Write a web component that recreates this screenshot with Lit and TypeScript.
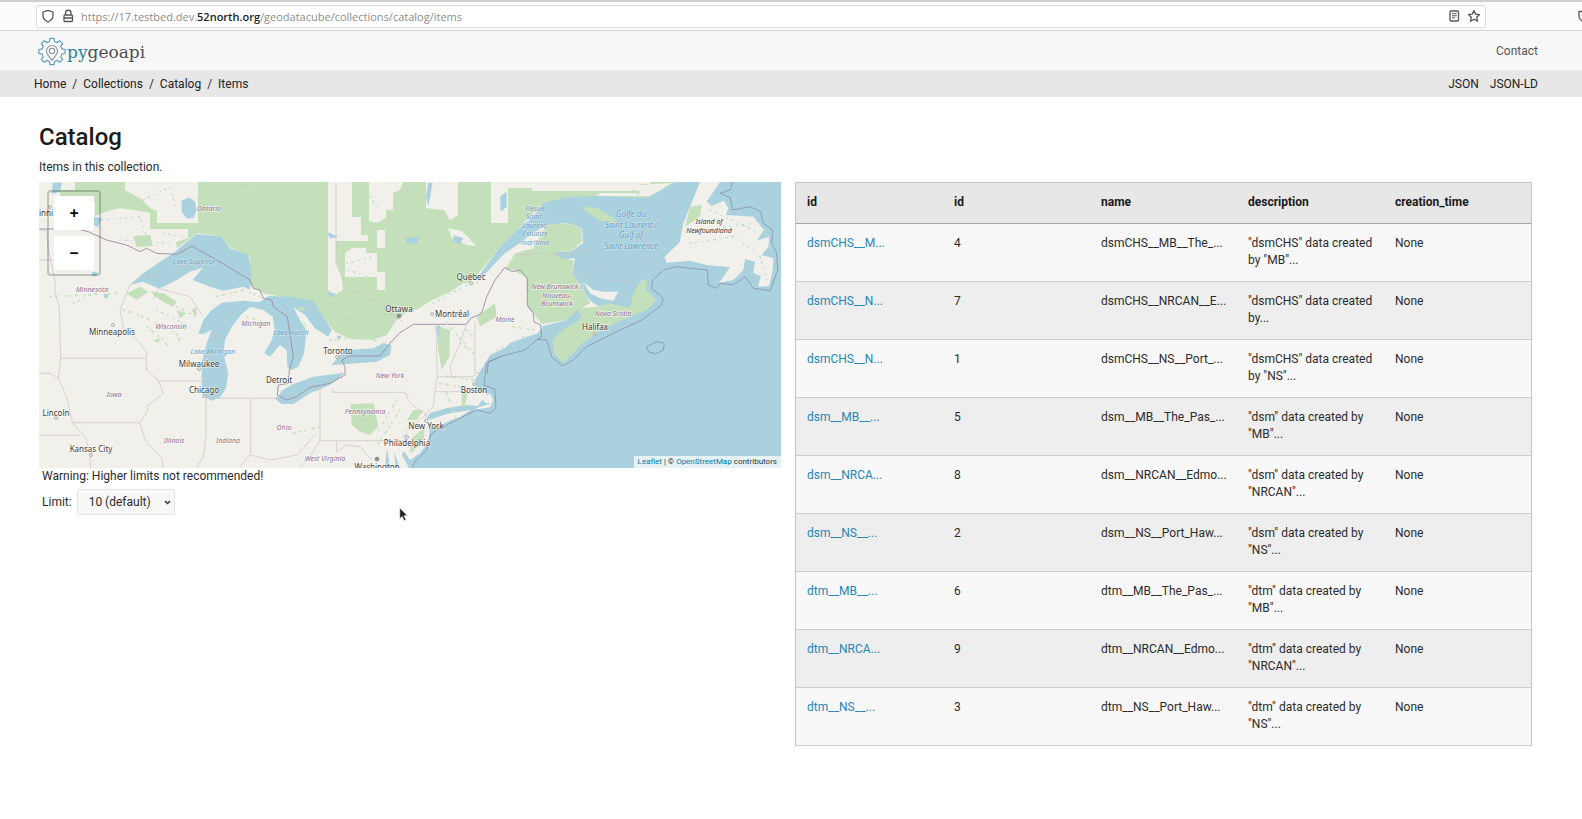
import { LitElement, html, svg, css } from "lit";
import { customElement, property } from "lit/decorators.js";

interface Item {
  id: string;
  num: number;
  name: string;
  lines: [string, string];
}

const ITEMS: Item[] = [
  { id: "dsmCHS__M...", num: 4, name: "dsmCHS__MB__The_...", lines: ['"dsmCHS" data created', 'by "MB"...'] },
  { id: "dsmCHS__N...", num: 7, name: "dsmCHS__NRCAN__E...", lines: ['"dsmCHS" data created', "by..."] },
  { id: "dsmCHS__N...", num: 1, name: "dsmCHS__NS__Port_...", lines: ['"dsmCHS" data created', 'by "NS"...'] },
  { id: "dsm__MB__...", num: 5, name: "dsm__MB__The_Pas_...", lines: ['"dsm" data created by', '"MB"...'] },
  { id: "dsm__NRCA...", num: 8, name: "dsm__NRCAN__Edmo...", lines: ['"dsm" data created by', '"NRCAN"...'] },
  { id: "dsm__NS__...", num: 2, name: "dsm__NS__Port_Haw...", lines: ['"dsm" data created by', '"NS"...'] },
  { id: "dtm__MB__...", num: 6, name: "dtm__MB__The_Pas_...", lines: ['"dtm" data created by', '"MB"...'] },
  { id: "dtm__NRCA...", num: 9, name: "dtm__NRCAN__Edmo...", lines: ['"dtm" data created by', '"NRCAN"...'] },
  { id: "dtm__NS__...", num: 3, name: "dtm__NS__Port_Haw...", lines: ['"dtm" data created by', '"NS"...'] },
];

/* Map labels: text, x, y, kind. */
const LABELS: [string, number, number, string][] = [
  ["inni", 46, 216, "city"],
  ["Ontario", 209, 211, "state"],
  ["Lake Superior", 194, 264, "water"],
  ["Minnesota", 92, 292, "state"],
  ["Wisconsin", 171, 329, "state"],
  ["Michigan", 256, 326, "state"],
  ["Lake Huron", 291, 335, "water"],
  ["Lake Michigan", 213, 354, "water"],
  ["Minneapolis", 112, 335, "city"],
  ["Milwaukee", 199, 367, "city"],
  ["Chicago", 204, 393, "city"],
  ["Detroit", 279, 383, "city"],
  ["Toronto", 338, 354, "city"],
  ["Ottawa", 399, 312, "city"],
  ["Montréal", 452, 317, "city"],
  ["Québec", 471, 280, "city"],
  ["Iowa", 114, 397, "state"],
  ["Lincoln", 56, 416, "city"],
  ["Kansas City", 91, 452, "city"],
  ["Illinois", 174, 443, "state"],
  ["Indiana", 228, 443, "state"],
  ["Ohio", 284, 430, "state"],
  ["West Virginia", 325, 461, "state"],
  ["Washington", 377, 470, "city"],
  ["Pennsylvania", 365, 414, "state"],
  ["New York", 390, 378, "state"],
  ["New York", 426, 429, "city"],
  ["Philadelphia", 407, 446, "city"],
  ["Boston", 474, 393, "city"],
  ["Maine", 505, 322, "state"],
  ["Halifax", 595, 330, "city"],
  ["Nova Scotia", 613, 316, "state"],
  ["New Brunswick /", 557, 289, "state"],
  ["Nouveau-", 557, 298, "state"],
  ["Brunswick", 557, 306, "state"],
  ["Fleuve", 535, 211, "water"],
  ["Saint-", 535, 219, "water"],
  ["Laurent,", 535, 228, "water"],
  ["Estuaire", 535, 236, "water"],
  ["maritime", 535, 245, "water"],
  ["Golfe du", 631, 217, "gulf"],
  ["Saint-Laurent /", 631, 228, "gulf"],
  ["Gulf of", 631, 238, "gulf"],
  ["Saint Lawrence", 631, 249, "gulf"],
  ["Island of", 709, 224, "island"],
  ["Newfoundland", 709, 233, "island"],
];

const DOTS: [number, number][] = [
  [50, 207], [113, 325], [199, 369], [204, 396], [337, 357], [432, 314],
  [471, 283], [56, 418], [91, 455], [426, 421], [407, 437], [474, 384], [595, 334],
];

@customElement("browser-bar")
export class BrowserBar extends LitElement {
  static styles = css`
    :host { display: block; }
    .bar {
      display: flex;
      align-items: center;
      box-sizing: border-box;
      height: 31px;
      padding: 0 0 0 36px;
      overflow: hidden;
      background: #fbfbfb;
      border-top: 2px solid #cfcfcf;
      border-bottom: 1px solid #d6d6d6;
    }
    .address {
      display: flex;
      flex: 1;
      align-items: center;
      gap: 6px;
      box-sizing: border-box;
      height: 23px;
      padding: 0 4px;
      background: #fff;
      border: 1px solid #dcdcdc;
      border-radius: 3px;
      margin-right: 92px;
    }
    .url { flex: 1; font-size: 11px; font-family: "Open Sans", "Noto Sans", sans-serif; color: #8c8c8c; white-space: nowrap; }
    .domain { color: #1c1c1c; font-weight: 600; }
    .icon {
      display: block;
      width: 14px;
      height: 14px;
      padding: 0;
      border: 0;
      background: none;
      color: #555;
    }
    .last { flex: none; margin-right: -10px; }
    svg { display: block; width: 14px; height: 14px; fill: none; stroke: currentColor; stroke-width: 1.3; }
  `;

  render() {
    return html`
      <div class="bar">
        <div class="address">
          <button class="icon" aria-label="Tracking protection">
            <svg viewBox="0 0 14 14"><path d="M7 1.300 12 3v3.500c0 3.300-2.500 5.200-5 6.500-2.500-1.300-5-3.200-5-6.500V3z" stroke-linejoin="round" /></svg>
          </button>
          <button class="icon" aria-label="Site information">
            <svg viewBox="0 0 14 14"><rect x="3" y="6" width="8.500" height="6.500" rx="1" /><path d="M4.500 6V4a2.700 2.700 0 0 1 5.500 0v2M3 9h8" /></svg>
          </button>
          <span class="url">https://17.testbed.dev.<span class="domain">52north.org</span>/geodatacube/collections/catalog/items</span>
          <button class="icon" aria-label="Reader view">
            <svg viewBox="0 0 14 14"><rect x="3" y="2" width="8.500" height="10" rx="1" /><path d="M5 4.700h4.700M5 6.800h4.700M5 8.900h3" stroke-width="1" /></svg>
          </button>
          <button class="icon" aria-label="Bookmark">
            <svg viewBox="0 0 14 14"><path d="m7 1.500 1.700 3.600 3.900.5-2.900 2.700.8 3.900L7 10.300l-3.500 1.900.8-3.900L1.400 5.600l3.900-.5z" stroke-linejoin="round" /></svg>
          </button>
        </div>
        <button class="icon last" aria-label="Save to Pocket">
          <svg viewBox="0 0 14 14"><path d="M1 2.500h12V7A6 5.500 0 0 1 1 7zM4 6l3 3 3-3" stroke-linejoin="round" /></svg>
        </button>
      </div>
    `;
  }
}

@customElement("collection-map")
export class CollectionMap extends LitElement {
  static styles = css`
    :host { display: block; position: relative; }
    .map { display: block; width: 100%; height: auto; overflow: hidden; }
    .map path { vector-effect: non-scaling-stroke; }
    .sea { fill: #a9d2de; }
    .land { fill: #f2f0ea; }
    .wood { fill: #c4e0ba; }
    .border { fill: none; stroke: #a08ca6; stroke-width: 1; stroke-opacity: 0.9; }
    .state-line { fill: none; stroke: #cdc2cd; stroke-width: 0.7; }
    .coast { fill: none; stroke: #8c95b5; stroke-width: 0.9; }
    .speck { fill: none; stroke: #cfe4c5; stroke-width: 2; stroke-linecap: round; stroke-dasharray: 1 5 2 7 0.5 4; }
    .pond { fill: none; stroke: #b5d8e2; stroke-width: 1.2; stroke-linecap: round; stroke-dasharray: 1 4 2 5 0.5 6; }
    .haze { fill: none; stroke: #d8ebcf; stroke-width: 0.8; stroke-dasharray: 1 5 2 7; opacity: 0.7; }
    .dot { fill: #f2f0ea; stroke: #888; stroke-width: 0.6; }
    .capital { fill: #8c8c8c; }
    .label {
      font-family: "Noto Sans", sans-serif;
      text-anchor: middle;
      paint-order: stroke;
      stroke: #fff;
      stroke-opacity: 0.6;
      stroke-width: 1.5px;
      font-size: 7px;
    }
    .city { fill: #3c3c3c; font-size: 8px; }
    .state { fill: #8d6f91; font-style: italic; }
    .water { fill: #6c9fc4; font-style: italic; stroke-opacity: 0.3; }
    .gulf { fill: #6c9fc4; font-style: italic; font-size: 8px; stroke-opacity: 0.3; }
    .island { fill: #333; font-style: italic; }
    .zoom {
      position: absolute;
      top: 8px;
      left: 8px;
      display: grid;
      gap: 6px;
      padding: 4px 5px;
      border: 2px solid rgba(0, 0, 0, 0.2);
      border-radius: 4px;
    }
    .zoom-button {
      width: 40px;
      height: 34px;
      padding: 0;
      border: 0;
      background: #fff;
      color: #000;
      font: bold 16px/34px "Noto Sans", sans-serif;
    }
    .credit {
      position: absolute;
      right: 0;
      bottom: 0;
      padding: 0 4px;
      background: rgba(255, 255, 255, 0.7);
      color: #333;
      font-size: 8px;
      line-height: 12px;
    }
    .credit a { color: #0078a8; text-decoration: none; }
  `;

  render() {
    return html`
      <svg class="map" viewBox="39 182 742 286" role="img" aria-label="Map of the collection extent">
        <rect class="land" x="39" y="182" width="742" height="286" />

        <path class="wood" d="M198 182H690L673 183 647 198 543 203 517 230 500 247 483 268 470 282 462 284 450 292 432 300 418 309 408 311 395 322 387 335 372 340 350 339 335 332 322 316 305 301 262 293 250 285 250 257 230 247 222 237 197 233 177 248 176 242 188 238 188 227H198Z" />
        <path class="wood" d="M75 182H125V190L141 199 150 208 157 211V223H198V229H150V213L140 211 120 208 108 211 95 216V203L75 196ZM133 236 150 235 153 246 137 247ZM60 190H84V196H60Z" />
        <path class="land" d="M328 182H352V217H361V235H368V241H336V262L341 275 343 290 335 295 328 290ZM369 182H403L400 190 393 193V210H386V218L377 223 369 221ZM426 182H458V215L450 220 444 210 434 209 426 208ZM491 182H508V223H491ZM377 230H385V248H377ZM345 253 352 248H366V253H377V272H385V290H377V277H345ZM508 182H650V185H646L640 191H532V188H508ZM655 184H640V189H655Z" />
        <path class="land" d="M448 228 462 231 476 246 467 245 452 238ZM640 185 672 183 650 196 596 196 600 193 640 193Z" />
        <path class="land" d="M483 276 470 284 452 294 440 306 428 316 415 322 440 323 460 321 472 310 487 296Z" opacity=".55" />

        <path class="sea" d="M781 182H678L673 183 647 198 600 196 567 197 543 203 533 217 517 230 500 247 483 270 478 277 484 275 505 253 520 243 533 233 547 225 567 223 582 228 583 243 570 252 553 252 563 260 575 258 572 273 582 287 587 297 593 303 600 307 591 311 576 310 567 320 543 326 538 333 527 337 510 343 505 348 490 355 482 368 475 380 477 393 484 392 490 398 488 404 482 400 478 406 467 405 447 408 430 413 427 418 430 428 428 443 420 453 410 460 404 451 402 455 409 468H781Z" />
        <path class="sea" d="M387 448 390 468H385ZM394 452 400 468H396Z" />
        <g transform="translate(30 110) scale(.33333)">
          <path class="sea" d="M300 525 340 490 390 455 430 430 470 395 500 372 575 380 600 415 655 435 665 480 660 540 640 530 580 542 540 530 488 510 520 472 480 485 440 510 400 530 385 535 340 515Z" />
          <path class="sea" d="M505 672 520 630 545 600 575 578 640 572 700 578 660 592 635 612 605 650 585 690 580 730 595 790 588 835 570 862 545 872 525 862 515 830 515 760 530 700 545 660 520 672Z" />
          <path class="sea" d="M660 590 700 570 715 558 780 560 850 572 880 620 905 660 895 680 855 655 825 615 790 592 815 640 830 660 822 730 805 770 785 780 772 770 770 720 750 705 720 740 703 730 725 690 735 660 728 620 700 600Z" />
          <path class="sea" d="M745 860 755 842 790 822 850 800 945 788 900 825 840 850 790 882 755 882 733 864ZM905 765 930 735 950 720 1030 715 1060 700 1085 705 1080 735 1040 755 950 762Z" />
          <path class="sea" d="M455 272 478 262 495 275 500 300 490 325 470 325 455 305ZM68 218H96L90 245 66 252ZM190 320 215 325 205 350 190 345ZM222 548 236 556 230 566 222 562ZM890 365 925 380 900 385ZM920 675 935 680 925 692ZM188 485 205 488 195 500 184 495ZM890 545 920 552 900 560Z" />
          <path class="wood" d="M290 550 330 530 355 545 320 570ZM360 545 400 550 440 575 430 590 390 570ZM440 600 470 610 450 625ZM485 600 500 590 498 620ZM370 690 390 685 385 700ZM800 590 830 595 815 605ZM815 630 825 640 830 655Z" />
          <path class="speck" d="M280 600 340 620 400 650 450 680 440 710M350 650 400 690 420 720M440 590 500 620M560 560 640 540 690 560M650 620 720 640M900 690 1000 680 1060 700M60 560 260 550" />
          <path class="pond" d="M215 330 330 320 350 380M270 390 430 400M340 270 420 230 440 300M180 340 230 360M400 370 460 380M130 580 240 530M380 600 480 650M1020 260 1050 300M950 460 1030 440M955 480 1010 500" />
          <path class="haze" d="M520 250 690 240 870 290M640 290 880 350M560 330 700 380M700 420 880 430M690 480 860 540M940 590 1040 640M880 600 1010 620M600 240 720 300" />
        </g>
        <g transform="translate(400 170) scale(.33333)">
          <path class="land" d="M900 36H960L920 95 935 108 972 92 985 115 978 135 1060 140 1092 180 1070 212 1108 200 1105 232 1085 255 1120 265 1118 300 1108 348 1075 350 1082 318 1060 310 1065 275 1035 268 1030 300 1000 330 958 338 990 292 920 285 870 272 800 278 793 262 840 215 850 160 870 110Z" />
          <path class="wood" d="M870 110 905 105 900 140 855 170ZM545 112 590 113 640 142 660 168 600 152 565 130Z" />
          <path class="wood" d="M590 410 630 400 690 415 700 370 728 325 742 335 738 360 770 390 740 420 690 440 610 475 585 495 545 520 520 550 488 578 462 550 458 510 480 485 530 455 545 440 530 415Z" />
          <path class="land" d="M552 338 580 360 610 365 655 365 640 392 600 385 570 370Z" />
          <path class="wood" d="M315 300 345 250 400 235 440 165 500 160 545 175 545 215 510 245 460 245 490 268 520 270 516 310 545 350 570 400 540 415 500 450 425 462 400 430 382 412 380 325 340 300ZM120 470 150 480 148 560 125 600 112 520ZM230 440 285 400 290 440 240 470Z" />
          <path class="sea" d="M85 38H98L85 110 78 80ZM300 80 320 65V110L302 125ZM160 195 190 205 180 222 162 215ZM15 205 60 200 50 222 20 218ZM108 470 120 465 115 520ZM930 305 945 310 940 340 932 335Z" />
          <path class="speck" d="M200 480 230 510M340 470 400 480M180 520 210 540M120 640 180 650" />
          <path class="pond" d="M330 540 370 500 400 500M290 540 345 520M100 400 190 350 250 330M870 220 1000 200 1060 240M900 180 1060 160M700 60 720 80M930 120 1080 190M1080 260 1100 330" />
          <path class="haze" d="M20 80 180 250M100 250 240 200M360 300 500 380M220 260 300 180M480 500 700 440M30 350 200 310" />
          <path class="coast" d="M998 36 990 60 960 70 990 82 998 120 1050 110 1082 125 1090 160 1118 180 1115 220 1130 250 1133 300 1110 362 1060 355 1035 320 1000 345 960 340 950 355 925 345 922 300 870 295 830 290 790 300 758 330 755 355 790 385 785 405 725 450 640 490 560 530 520 570 488 588 455 560 440 510 412 508 375 540 300 560 265 575 262 610M740 530 770 515 793 520 790 540 765 552 745 545Z" />
          <path class="state-line" d="M862 42 830 90 775 150 740 200 742 270 790 290M742 270 700 310 690 335 640 330 600 290 580 245 540 235 500 258 420 250 355 255M640 400 665 385 690 335M540 330 600 280M440 505 500 450 570 390" />
          <path class="border" d="M0 488 40 463H200L212 445 245 430 260 380 285 330 315 292 335 305 362 300 382 325 382 405 400 430 402 455 422 465 425 500 412 508" />
        </g>
        <g transform="translate(260 180) scale(.33333)">
          <path class="wood" d="M272 672 340 670 345 690 355 740 330 765 300 755 275 735ZM440 720 460 690 490 690 470 720ZM455 775 495 740 490 790 450 820ZM605 635 622 635 615 680 605 680Z" />
          <path class="land" d="M500 722 560 702 632 690 600 710 530 738 502 740ZM672 650 690 640 700 660 690 682 640 690 660 680 690 672Z" />
          <path class="speck" d="M410 660 350 760M180 740 100 760M560 590 640 600M560 640 590 720M560 430 640 520M420 690 350 800" />
          <path class="state-line" d="M180 620V782H440M218 625V637H435L450 670 500 705 498 715M440 782 430 770 445 750 490 710 520 680 524 635 532 590 528 434M524 635H625M532 590H640L655 575M575 587 570 560 600 490 622 425M645 580V425M230 785V815L260 795 300 800 335 840M180 782 150 830 120 860M228 8V255L270 330 350 365 390 400 430 425" />
          <path class="coast" d="M720 530 680 550 672 615 705 628 708 685 690 700 650 690 620 705 530 750 512 765 500 810 465 845 458 862" />
        </g>
        <g transform="translate(30 300) scale(.33333)">
          <path class="state-line" d="M28-210H50L55-150 75-60 75-20 88 20 92 175H348L352 160 330 130 280 80 270 30 300-45M28-120H85M92 175 85 235 60 220H28M85 235 110 290 128 370 165 410 180 460 182 504M28 406H150M128 368H330L355 330 350 320 400 280 385 242 350 210 348 175M380 243H552M528 295V410L520 470 500 504M528 295H740M662 295V460L630 500M330 368 345 420 395 475 400 504M662 465 720 480 800 465 860 400M550 240 560 90 590 40M300-45 330-70 400-75 490-120M370 0 385-35 480-10 520 50" />
          <path class="border" d="M28-213H140L175-205 230-180 290-165 330-145 350-155 380-140 440-137 486-162 560-120 660-60 670-35 690-30 700-5 725 0 730 20 772 50 790 170 778 210 775 250 745 255 742 285 770 300 800 290 840 262 900 250 945 225 945 200 935 180 960 168H1050L1080 130 1110 98" />
        </g>

        <circle class="capital" cx="399" cy="316" r="2.300" />
        <circle class="capital" cx="377" cy="459" r="2.300" />
        ${DOTS.map(([x, y]) => svg`<circle class="dot" cx=${x} cy=${y} r="1.500" />`)}
        ${LABELS.map(([t, x, y, kind]) => svg`<text class="label ${kind}" x=${x} y=${y}>${t}</text>`)}
      </svg>
      <div class="zoom">
        <button class="zoom-button" aria-label="Zoom in">+</button>
        <button class="zoom-button" aria-label="Zoom out">−</button>
      </div>
      <div class="credit"><a href="#leaflet">Leaflet</a> | © <a href="#osm">OpenStreetMap</a> contributors</div>
    `;
  }
}

@customElement("items-table")
export class ItemsTable extends LitElement {
  @property({ attribute: false }) items: Item[] = [];

  static styles = css`
    :host { display: block; }
    .table {
      width: 100%;
      table-layout: fixed;
      border-collapse: separate;
      border-spacing: 0;
      border: 1px solid #c4c4c4;
      border-bottom-width: 0;
      color: #2b2b2b;
      font-size: 12px;
      line-height: 17px;
    }
    .head {
      padding: 11px 11px 12px;
      background: #e7e7e7;
      border-bottom: 1px solid #a6a6a6;
      color: #1a1a1a;
      font-weight: 700;
      text-align: left;
    }
    .cell {
      padding: 11px 11px 12px;
      border-bottom: 1px solid #cdcdcd;
      vertical-align: top;
      white-space: nowrap;
    }
    .row { background: #f8f8f8; }
    .row:nth-child(even) { background: #eee; }
    .link { color: #2487b3; text-decoration: none; }
  `;

  render() {
    return html`
      <table class="table">
        <thead>
          <tr>
            ${["id", "id", "name", "description", "creation_time"].map((h) => html`<th class="head" scope="col">${h}</th>`)}
          </tr>
        </thead>
        <tbody>
          ${this.items.map(
            (item) => html`
              <tr class="row">
                <td class="cell"><a class="link" href="#${item.num}">${item.id}</a></td>
                <td class="cell">${item.num}</td>
                <td class="cell">${item.name}</td>
                <td class="cell">${item.lines[0]}<br />${item.lines[1]}</td>
                <td class="cell">None</td>
              </tr>
            `
          )}
        </tbody>
      </table>
    `;
  }
}

@customElement("app-root")
export class AppRoot extends LitElement {
  static styles = css`
    :host {
      display: block;
      position: relative;
      min-height: 100vh;
      background: #fff;
      color: #2b2b2b;
      font-family: Roboto, "Noto Sans", sans-serif;
      font-size: 12px;
      line-height: 17px;
    }
    .header {
      display: flex;
      align-items: center;
      justify-content: space-between;
      box-sizing: border-box;
      height: 39px;
      padding: 2px 44px 0 37px;
      background: #f8f8f8;
    }
    .logo { display: flex; align-items: center; text-decoration: none; }
    .gear { width: 30px; height: 30px; }
    .wordmark { font: 17px/24px "DejaVu Serif", serif; color: #4b4f52; }
    .py { color: #2f80a3; }
    .contact { color: #555; text-decoration: none; }
    .crumbs {
      display: flex;
      align-items: center;
      justify-content: space-between;
      box-sizing: border-box;
      height: 27px;
      padding: 2px 44px 0 34px;
      background: #e7e7e7;
    }
    .trail { display: flex; gap: 6px; }
    .formats { display: flex; gap: 11px; }
    .crumb { color: #222; text-decoration: none; }
    .main { padding: 24px 50px 0 39px; }
    .title { margin: 0; font-size: 24px; line-height: 32px; font-weight: 500; color: #1c1c1c; }
    .intro { margin: 6px 0; }
    .columns { display: grid; grid-template-columns: minmax(0, 742fr) minmax(0, 737fr); gap: 14px; align-items: start; }
    .limits { padding-left: 3px; }
    .warning { margin: 0 0 4px; }
    .limit { display: flex; align-items: center; gap: 5px; }
    .picker { position: relative; display: flex; align-items: center; }
    .select {
      appearance: none;
      width: 98px;
      height: 26px;
      padding: 0 0 0 11px;
      border: 1px solid #e4e4e4;
      border-radius: 2px;
      background: #f8f8f8;
      color: #2b2b2b;
      font: inherit;
    }
    .arrow { position: absolute; right: 4px; width: 7px; height: 7px; fill: none; stroke: #333; stroke-width: 1.5; pointer-events: none; }
    .pointer { position: absolute; top: 507px; left: 399px; width: 9px; height: 15px; pointer-events: none; }
  `;

  render() {
    return html`
      <browser-bar></browser-bar>
      <header class="header">
        <a class="logo" href="#home" aria-label="pygeoapi">
          <svg class="gear" viewBox="0 0 30 30" fill="none" stroke-linejoin="round">
            <path
              stroke="#5b9dbb"
              stroke-width="1.200"
              d="M12.500 4.500 13 1.300h4l.5 3.200 2.700 1.100L22.800 3.700l2.900 2.900-1.900 2.600 1.100 2.700 3.200.6v4l-3.200.6-1.100 2.700 1.900 2.600-2.900 2.900-2.600-1.900-2.700 1.100-.5 3.200h-4l-.5-3.200-2.700-1.100-2.600 1.900-2.900-2.900 1.900-2.600-1.100-2.700-3.200-.6v-4l3.200-.6 1.100-2.700-1.900-2.600 2.900-2.900 2.600 1.900z"
            />
            <path stroke="#8b9499" stroke-width="1.100" d="M15 23.500c-2.300-3.600-5.500-6.200-5.500-9.500a5.500 5.500 0 0 1 11 0c0 3.300-3.200 5.900-5.500 9.500z" />
            <circle stroke="#8b9499" stroke-width="1.100" cx="15" cy="14" r="2.700" />
          </svg>
          <span class="wordmark"><span class="py">py</span>geoapi</span>
        </a>
        <a class="contact" href="#contact">Contact</a>
      </header>
      <nav class="crumbs" aria-label="Breadcrumb">
        <div class="trail">
          <a class="crumb" href="#home">Home</a><span>/</span>
          <a class="crumb" href="#collections">Collections</a><span>/</span>
          <a class="crumb" href="#catalog">Catalog</a><span>/</span>
          <a class="crumb" href="#items">Items</a>
        </div>
        <div class="formats">
          <a class="crumb" href="#json">JSON</a>
          <a class="crumb" href="#jsonld">JSON-LD</a>
        </div>
      </nav>
      <main class="main">
        <h1 class="title">Catalog</h1>
        <p class="intro">Items in this collection.</p>
        <div class="columns">
          <section>
            <collection-map></collection-map>
            <div class="limits">
              <p class="warning">Warning: Higher limits not recommended!</p>
              <div class="limit">
                <label for="limit">Limit:</label>
                <span class="picker">
                  <select class="select" id="limit">
                    <option>10 (default)</option>
                    <option>100</option>
                    <option>1,000</option>
                  </select>
                  <svg class="arrow" viewBox="0 0 7 7"><path d="m1 2 2.500 2.500L6 2" /></svg>
                </span>
              </div>
            </div>
          </section>
          <items-table .items=${ITEMS}></items-table>
        </div>
      </main>
      <svg class="pointer" viewBox="0 0 9 15"><path d="M.7.8v11l2.500-2.400 1.900 4.300 1.900-.8-1.900-4.200h3.300z" fill="#222" stroke="#fff" stroke-width=".6" /></svg>
    `;
  }
}
